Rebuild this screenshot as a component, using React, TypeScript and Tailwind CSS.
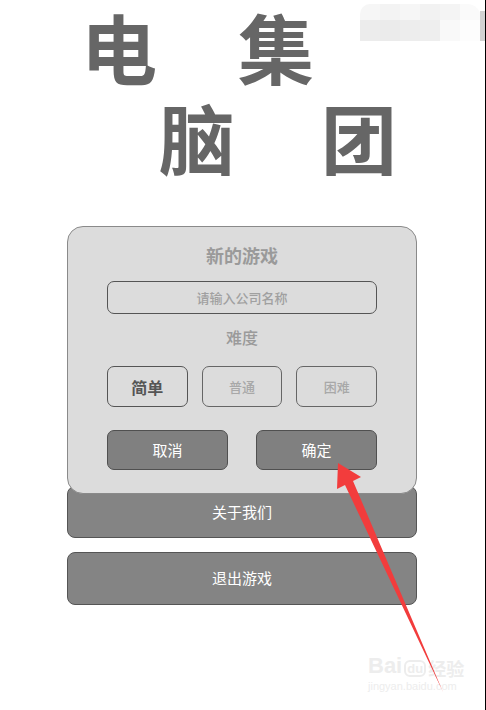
import React from "react";

const cjk = { fontFamily: '"Noto Sans CJK SC", "Noto Sans", sans-serif' };

export default function App() {
  return (
    <div
      className="relative w-[486px] h-[710px] bg-white overflow-hidden border-r border-black"
      style={cjk}
    >
      {/* blurred top-right patch */}
      <div className="absolute left-[360px] top-[4px] w-[121px] h-[37px] rounded-tl-[10px] rounded-tr-[14px] overflow-hidden flex flex-col">
        <div className="flex h-[16px]">
          <div className="w-[20px] bg-[#f6f6f6]" />
          <div className="w-[20px] bg-[#f3f3f3]" />
          <div className="w-[20px] bg-[#f6f6f6]" />
          <div className="w-[20px] bg-[#f2f2f2]" />
          <div className="w-[20px] bg-[#f4f4f4]" />
          <div className="w-[21px] bg-[#fafafa]" />
        </div>
        <div className="flex flex-1">
          <div className="w-[20px] bg-[#ececec]" />
          <div className="w-[20px] bg-[#ebebeb]" />
          <div className="w-[20px] bg-[#ededed]" />
          <div className="w-[20px] bg-[#eeeeee]" />
          <div className="w-[20px] bg-[#f9f9f9]" />
          <div className="w-[21px] bg-[#fdfdfd]" />
        </div>
      </div>
      <div className="absolute left-[480px] top-[11px] w-[5px] h-[30px] bg-[#d2d2d2]" />

      {/* title */}
      <div className="text-[#666666] font-bold text-[76px] leading-[1.2]">
        <div className="flex pl-[81px] gap-[81px] h-[93px] items-center">
          <span>电</span>
          <span>集</span>
        </div>
        <div className="flex pl-[159px] gap-[86px] h-[88px] items-center">
          <span>脑</span>
          <span>团</span>
        </div>
      </div>

      {/* dialog */}
      <div className="absolute left-0 top-[226px] w-full">
        <div className="relative z-10 mx-[67px] w-[350px] rounded-[16px] border border-[#8a8a8a] bg-[#dcdcdc] px-[39px] pt-[16px] pb-[23px] flex flex-col items-center">
          <div className="text-[18px] leading-6 font-bold text-[#9a9a9a]">新的游戏</div>
          <div className="mt-[14px] w-[270px] h-[33px] rounded-[7px] border border-[#555555] flex items-center justify-center text-[13px] font-medium text-[#a0a0a0]">
            请输入公司名称
          </div>
          <div className="mt-[11px] text-[16px] leading-6 font-medium text-[#9a9a9a]">难度</div>
          <div className="mt-[17px] w-[270px] grid grid-cols-3 gap-[14px]">
            <div className="h-[41px] rounded-[7px] border border-[#555555] flex items-center justify-center text-[16px] font-bold text-[#555555]">
              简单
            </div>
            <div className="h-[41px] rounded-[7px] border border-[#666666] flex items-center justify-center text-[13px] font-medium text-[#a8a8a8]">
              普通
            </div>
            <div className="h-[41px] rounded-[7px] border border-[#666666] flex items-center justify-center text-[13px] font-medium text-[#a8a8a8]">
              困难
            </div>
          </div>
          <div className="mt-[23px] w-[270px] flex gap-[28px]">
            <div className="w-[121px] h-[40px] rounded-[7px] border border-[#505050] bg-[#808080] flex items-center justify-center text-[15px] text-white">
              取消
            </div>
            <div className="w-[121px] h-[40px] rounded-[7px] border border-[#505050] bg-[#808080] flex items-center justify-center text-[15px] text-white">
              确定
            </div>
          </div>
        </div>
        <div className="mx-[67px] -mt-2 w-[350px] h-[52px] rounded-[8px] border border-[#555555] bg-[#848484] flex items-center justify-center text-[15px] text-white">
          关于我们
        </div>
        <div className="mx-[67px] mt-[14px] w-[350px] h-[53px] rounded-[8px] border border-[#555555] bg-[#848484] flex items-center justify-center text-[15px] text-white">
          退出游戏
        </div>
      </div>

      {/* watermark */}
      <div className="absolute left-[368px] top-[655px] flex flex-col items-start text-[#ededed] leading-none">
        <div className="flex items-end gap-[2px]">
          <span className="text-[22px] font-bold" style={{ fontFamily: '"Liberation Sans", sans-serif' }}>Bai</span>
          <span className="text-[13px] font-bold rounded-[6px] border-2 border-[#ededed] px-[1px]" style={{ fontFamily: '"Liberation Sans", sans-serif' }}>du</span>
          <span className="text-[18px] font-bold">经验</span>
        </div>
        <span className="mt-[4px] text-[11px]" style={{ fontFamily: '"Liberation Sans", sans-serif' }}>jingyan.baidu.com</span>
      </div>

      {/* red arrow */}
      <svg className="absolute left-0 top-0 z-20 pointer-events-none" width="486" height="710" viewBox="0 0 486 710">
        <polygon points="338,463 361,477 353,481 443,692 345,485 337,489" fill="#f23c3c" />
      </svg>
    </div>
  );
}
